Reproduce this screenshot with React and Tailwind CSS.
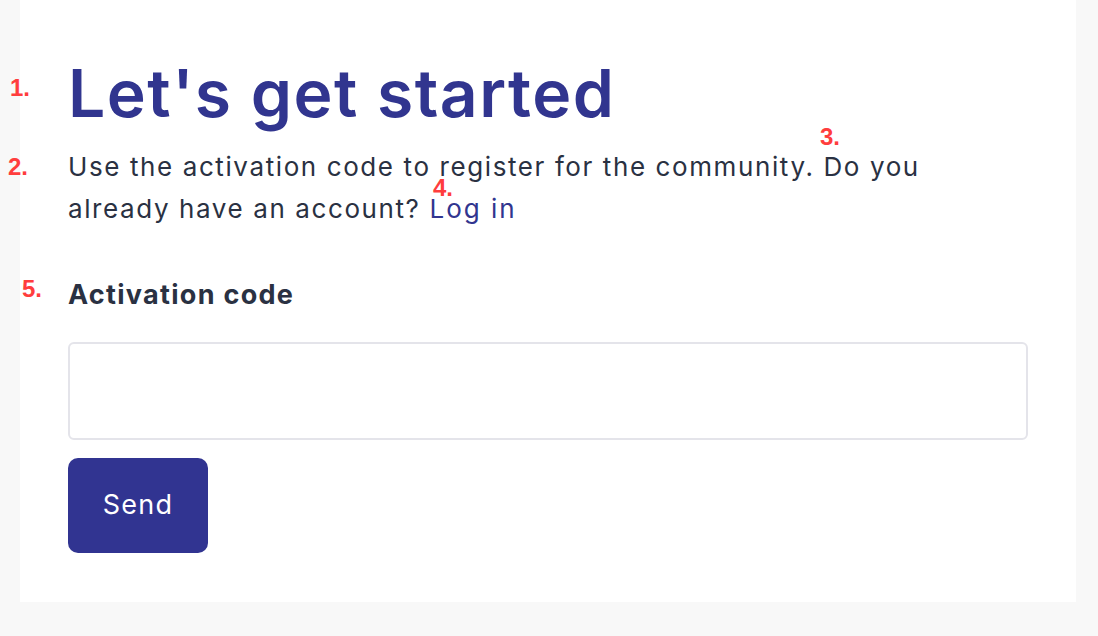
const Mark = ({ className, children }) => (
  <span
    className={`absolute font-bold text-[24px] leading-none text-[#ff3d3d] ${className}`}
    style={{ fontFamily: '"Liberation Sans", Arial, sans-serif' }}
  >
    {children}
  </span>
);

export default function App() {
  return (
    <div
      className="min-h-screen bg-[#f8f8f8] pl-[20px] pr-[22px] text-[#2a3142]"
      style={{ fontFamily: 'Inter, "Noto Sans", sans-serif' }}
    >
      <div className="relative flex h-[602px] flex-col items-start bg-white px-[48px] pt-[53px]">
        {/* Annotations */}
        <Mark className="left-[-10px] top-[76px]">1.</Mark>
        <Mark className="left-[-12px] top-[155px]">2.</Mark>
        <Mark className="left-[800px] top-[125px]">3.</Mark>
        <Mark className="left-[413px] top-[176px]">4.</Mark>
        <Mark className="left-[2px] top-[277px]">5.</Mark>

        <h1 className="text-[66px] font-semibold leading-[80px] tracking-[1.5px] text-[#31358f]">
          Let's get started
        </h1>

        <p className="mt-[13px] text-[26px] leading-[42px] tracking-[1.6px] text-[#2a3142]">
          Use the activation code to register for the community. Do you
          <br />
          already have an account?{" "}
          <a href="#" className="text-[#31358f] tracking-[2px]">
            Log in
          </a>
        </p>

        <label className="mt-[49px] block text-[27px] font-bold leading-[32px] tracking-[1.3px] text-[#2a3142]">
          Activation code
        </label>

        <input
          type="text"
          className="mt-[31px] block h-[98px] w-full rounded-[6px] border-2 border-[#e4e4ea] bg-white px-4 text-[24px] outline-none"
        />

        <button className="mt-[18px] h-[95px] w-[140px] rounded-[10px] bg-[#313491] text-[27px] tracking-[1.2px] text-white">
          Send
        </button>
      </div>
    </div>
  );
}
